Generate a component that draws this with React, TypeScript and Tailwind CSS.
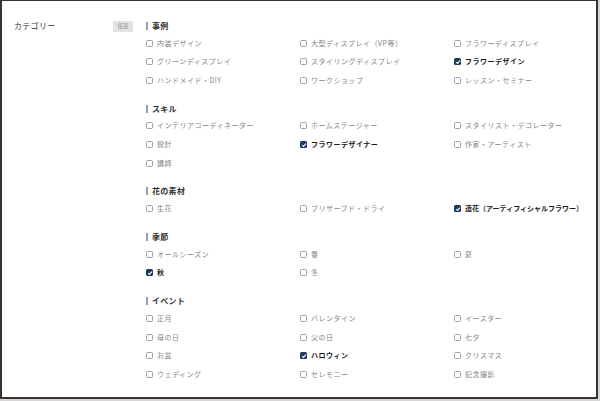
type Item = { label: string; checked?: boolean; tight?: boolean };

const sections: { title: string; items: Item[] }[] = [
  {
    title: "事例",
    items: [
      { label: "内装デザイン" },
      { label: "大型ディスプレイ（VP等）" },
      { label: "フラワーディスプレイ" },
      { label: "グリーンディスプレイ" },
      { label: "スタイリングディスプレイ" },
      { label: "フラワーデザイン", checked: true },
      { label: "ハンドメイド・DIY" },
      { label: "ワークショップ" },
      { label: "レッスン・セミナー" },
    ],
  },
  {
    title: "スキル",
    items: [
      { label: "インテリアコーディネーター" },
      { label: "ホームステージャー" },
      { label: "スタイリスト・デコレーター" },
      { label: "設計" },
      { label: "フラワーデザイナー", checked: true },
      { label: "作家・アーティスト" },
      { label: "講師" },
    ],
  },
  {
    title: "花の素材",
    items: [
      { label: "生花" },
      { label: "プリザーブド・ドライ" },
      { label: "造花（アーティフィシャルフラワー）", checked: true, tight: true },
    ],
  },
  {
    title: "季節",
    items: [
      { label: "オールシーズン" },
      { label: "春" },
      { label: "夏" },
      { label: "秋", checked: true },
      { label: "冬" },
    ],
  },
  {
    title: "イベント",
    items: [
      { label: "正月" },
      { label: "バレンタイン" },
      { label: "イースター" },
      { label: "母の日" },
      { label: "父の日" },
      { label: "七夕" },
      { label: "お盆" },
      { label: "ハロウィン", checked: true },
      { label: "クリスマス" },
      { label: "ウェディング" },
      { label: "セレモニー" },
      { label: "記念撮影" },
    ],
  },
];

function Check({ item }: { item: Item }) {
  return (
    <label className="flex items-center gap-[4px] h-[18.8px]">
      {item.checked ? (
        <span className="w-[7px] h-[7px] rounded-[1.5px] bg-[#1f3a5f] flex items-center justify-center">
          <svg width="6" height="6" viewBox="0 0 10 10">
            <path d="M2 5.2 L4.2 7.4 L8.2 2.6" fill="none" stroke="white" strokeWidth="1.8" />
          </svg>
        </span>
      ) : (
        <span className="w-[7px] h-[7px] rounded-[1.5px] border border-[#a0a0a0] bg-white" />
      )}
      <span
        className={
          item.checked
            ? `text-[7px] ${item.tight ? "tracking-[0px]" : "tracking-[0.5px]"} font-bold text-[#1a1a1a] leading-none`
            : "text-[7px] tracking-[0.5px] text-[#858585] leading-none"
        }
      >
        {item.label}
      </span>
    </label>
  );
}

export default function App() {
  return (
    <div
      className="w-[600px] h-[401px] bg-[#d6d6d6] overflow-hidden"
      style={{ fontFamily: '"Noto Sans CJK JP", "Noto Sans", sans-serif' }}
    >
      <div className="w-[598px] h-[399px] bg-white border-l-2 border-t border-r-2 border-b-2 border-[#3b322e] pl-[12px] pt-[18.7px] flex">
        {/* label column */}
        <div className="w-[99px] h-[12px] flex items-center text-[8px] text-[#333] tracking-[0.3px]">
          カテゴリー
        </div>
        <div className="w-[20px] h-[11px] mt-[1px] bg-[#e3e3e3] flex items-center justify-center text-[5.5px] text-[#8a8a8a]">
          任意
        </div>

        {/* options */}
        <div className="ml-[13px] flex flex-col gap-[12.5px]">
          {sections.map((s) => (
            <div key={s.title} className="flex flex-col gap-[2px]">
              <div className="h-[12px] flex items-center gap-[4px]">
                <span className="w-[2px] h-[8px] bg-[#8fa2b8]" />
                <span className="text-[8px] font-bold text-[#333] tracking-[0.3px] leading-none">{s.title}</span>
              </div>
              <div className="grid grid-cols-[154px_154px_140px]">
                {s.items.map((it) => (
                  <Check key={it.label} item={it} />
                ))}
              </div>
            </div>
          ))}
        </div>
      </div>
    </div>
  );
}
